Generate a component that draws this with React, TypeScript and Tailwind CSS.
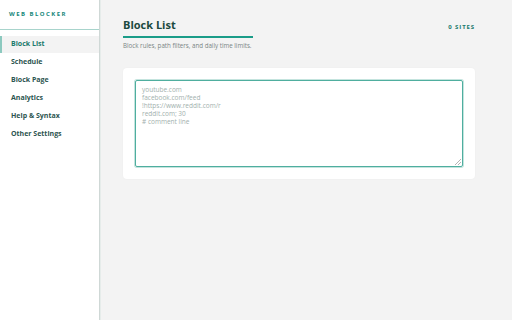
import React from 'react';

const NAV = ['Block List', 'Schedule', 'Block Page', 'Analytics', 'Help & Syntax', 'Other Settings'];

const PLACEHOLDER = `youtube.com
facebook.com/feed
!https://www.reddit.com/r
reddit.com; 30
# comment line`;

export default function App() {
  return (
    <div
      className="flex h-[320px] w-[512px] bg-[#f3f3f3]"
      style={{ fontFamily: '"Open Sans", "Noto Sans", sans-serif' }}
    >
      {/* Sidebar */}
      <aside className="flex w-[100px] shrink-0 flex-col border-r border-[#cfd8d6] bg-white shadow-[1px_0_0_#e6ecea]">
        <div className="flex h-[30px] items-center border-b border-[#a8d4cc] pl-[9px]">
          <span className="text-[6px] font-bold tracking-[0.24em] text-[#16877a]">WEB BLOCKER</span>
        </div>
        <nav className="mt-[6px] flex flex-col">
          {NAV.map((item, i) => (
            <div
              key={item}
              className={
                i === 0
                  ? 'flex h-[17px] items-center border-l-2 border-[#8cc9bf] bg-[#f3f3f3] pl-[9px] text-[7px] font-bold text-[#1a7a6c]'
                  : 'flex h-[18px] items-center pl-[11px] text-[7px] font-bold text-[#2d5550]'
              }
            >
              {item}
            </div>
          ))}
        </nav>
      </aside>

      {/* Main */}
      <main className="flex flex-1 flex-col pl-[23px] pr-[37px] pt-[17px]">
        <div className="flex items-start justify-between">
          <div className="flex flex-col">
            <h1 className="w-[130px] border-b-2 border-[#1a9c88] pb-[3px] text-[11px] font-bold leading-[16px] text-[#1b4a40]">
              Block List
            </h1>
            <p className="mt-[3px] text-[6.2px] text-[#7a8584]">Block rules, path filters, and daily time limits.</p>
          </div>
          <span className="mt-[6px] text-[6px] font-bold tracking-[0.15em] text-[#1a7a6c]">0 SITES</span>
        </div>

        <div className="mt-[18px] rounded-[4px] bg-white p-[12px] shadow-[0_0_2px_rgba(0,0,0,0.04)]">
          <div className="relative">
            <textarea
              autoFocus
              placeholder={PLACEHOLDER}
              className="block h-[87px] w-full resize-none rounded-[2px] border border-[#4fae9f] px-[6px] py-[5px] text-[6.5px] leading-[8px] text-[#2d5550] caret-[#1b4a40] outline-none shadow-[0_0_0_1px_#c4e4de] placeholder:text-[#9fb0ad]"
            />
            <svg className="absolute bottom-[2px] right-[2px]" width="6" height="6" viewBox="0 0 6 6">
              <path d="M6 0 L0 6 M6 3 L3 6" stroke="#b5b5b5" strokeWidth="1" />
            </svg>
          </div>
        </div>
      </main>
    </div>
  );
}
